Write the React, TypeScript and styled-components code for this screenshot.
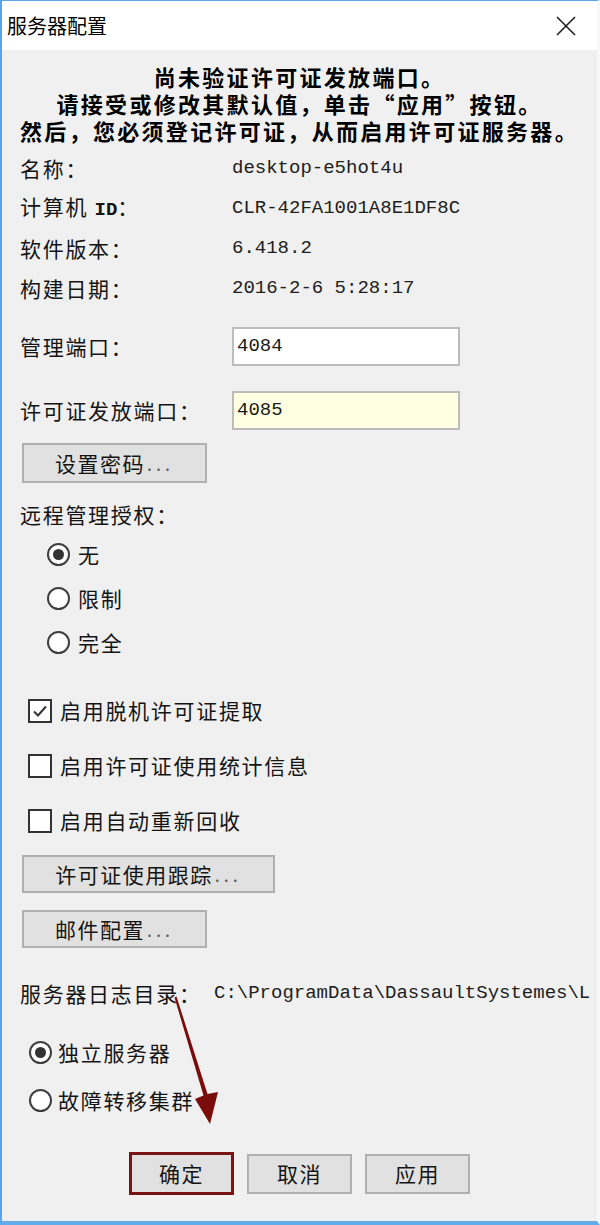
import React from "react";
import styled, { createGlobalStyle } from "styled-components";

const Global = createGlobalStyle`
  html, body { margin: 0; padding: 0; background: #ffffff; }
  * { box-sizing: border-box; }
`;

const CJK = `"Noto Sans CJK SC", "Noto Sans", sans-serif`;
const MONO = `"Liberation Mono", "DejaVu Sans Mono", monospace`;

const Window = styled.div`
  width: 600px;
  height: 1225px;
  border-top: 1px solid #5aa5e6;
  border-left: 2px solid #5aa5e6;
  border-right: 3px solid #f6f8fa;
  border-bottom: 4px solid #64abe9;
  display: flex;
  flex-direction: column;
  font-family: ${CJK};
  color: #141414;
  overflow: hidden;
`;

const TitleBar = styled.div`
  height: 49px;
  flex: none;
  background: #ffffff;
  display: flex;
  align-items: center;
  justify-content: space-between;
  padding: 0 21px 0 5px;
`;

const Title = styled.div`
  font-size: 20px;
  line-height: 1;
  color: #000;
`;

const Body = styled.div`
  flex: 1;
  background: #f0f0f0;
  position: relative;
  display: flex;
  flex-direction: column;
`;

const Header = styled.div`
  padding-top: 13px;
  text-align: center;
  font-size: 22px;
  font-weight: 700;
  letter-spacing: 2.3px;
  line-height: 27px;
  color: #000;
`;

const HeaderLine = styled.div`
  height: 27px;
  overflow: visible;
`;

const Content = styled.div`
  padding-left: 18px;
  display: flex;
  flex-direction: column;
`;

const InfoGrid = styled.div`
  margin-top: 4px;
  display: grid;
  grid-template-columns: 212px 1fr;
  grid-auto-rows: 40px;
  align-items: center;
`;

const Label = styled.div`
  font-size: 21px;
  letter-spacing: 1.7px;
  line-height: 1;
  white-space: nowrap;
`;

const MonoInline = styled.span`
  font-family: ${MONO};
  font-weight: 700;
  font-size: 19px;
  letter-spacing: 0;
`;

const Value = styled.div`
  font-family: ${MONO};
  font-size: 19px;
  color: #202020;
  white-space: nowrap;
  overflow: hidden;
`;

const FieldRow = styled.div<{ $mt: number; $h?: number; $col?: number }>`
  margin-top: ${(p) => p.$mt}px;
  height: ${(p) => p.$h ?? 40}px;
  display: grid;
  grid-template-columns: ${(p) => p.$col ?? 212}px 1fr;
  align-items: center;
`;

const TextBox = styled.input<{ $bg?: string }>`
  width: 228px;
  height: 39px;
  border: 2px solid #bcbcbc;
  background: ${(p) => p.$bg ?? "#ffffff"};
  font-family: ${MONO};
  font-size: 19px;
  color: #1a1a1a;
  padding: 0 0 0 3px;
  outline: none;
`;

const PushButton = styled.button<{ $w: number; $h?: number; $mt?: number; $ml?: number; $primary?: boolean }>`
  width: ${(p) => p.$w}px;
  height: ${(p) => p.$h ?? 40}px;
  margin-top: ${(p) => p.$mt ?? 0}px;
  margin-left: ${(p) => p.$ml ?? 0}px;
  background: #e1e1e1;
  border: ${(p) => (p.$primary ? "3px solid #7a1414" : "2px solid #b0b0b0")};
  font-family: ${CJK};
  font-size: 21px;
  letter-spacing: 1.5px;
  color: #141414;
  padding: 0;
  display: flex;
  align-items: center;
  justify-content: center;
  line-height: 1;
  flex: none;
`;

const Dots = styled.span`
  color: #5a5a5a;
  letter-spacing: 4px;
  font-size: 18px;
  margin-left: 2px;
`;

const GroupLabel = styled.div`
  margin-top: 14px;
  height: 35px;
  display: flex;
  align-items: center;
`;

const OptionList = styled.div<{ $mt: number; $indent: number }>`
  margin-top: ${(p) => p.$mt}px;
  padding-left: ${(p) => p.$indent}px;
  display: flex;
  flex-direction: column;
`;

const Option = styled.div<{ $h: number; $gap: number }>`
  height: ${(p) => p.$h}px;
  display: flex;
  align-items: center;
  gap: ${(p) => p.$gap}px;
`;

const RadioMark = styled.span<{ $on?: boolean }>`
  width: 23px;
  height: 23px;
  border-radius: 50%;
  border: 2px solid #3f3f3f;
  background: #ffffff;
  flex: none;
  display: flex;
  align-items: center;
  justify-content: center;
  &::after {
    content: "";
    width: 11px;
    height: 11px;
    border-radius: 50%;
    background: ${(p) => (p.$on ? "#333333" : "transparent")};
  }
`;

const CheckMark = styled.span`
  width: 24px;
  height: 24px;
  border: 2px solid #333333;
  background: #ffffff;
  flex: none;
  display: flex;
  align-items: center;
  justify-content: center;
`;

const ButtonBar = styled.div`
  margin-top: 28px;
  padding-left: 109px;
  height: 43px;
  display: flex;
  align-items: center;
  gap: 13px;
`;

const Overlay = styled.svg`
  position: absolute;
  left: 0;
  top: 0;
  width: 595px;
  height: 1171px;
  pointer-events: none;
`;

const Radio = ({ on, label, h, gap }: { on?: boolean; label: string; h: number; gap: number }) => (
  <Option $h={h} $gap={gap}>
    <RadioMark $on={on} />
    <Label>{label}</Label>
  </Option>
);

const Check = ({ on, label }: { on?: boolean; label: string }) => (
  <Option $h={55} $gap={8}>
    <CheckMark>
      {on && (
        <svg width="18" height="18" viewBox="0 0 18 18">
          <path d="M3 9.5 L7 13.5 L15 4.5" fill="none" stroke="#333" strokeWidth="2" />
        </svg>
      )}
    </CheckMark>
    <Label>{label}</Label>
  </Option>
);

export default function App() {
  return (
    <>
      <Global />
      <Window>
        <TitleBar>
          <Title>服务器配置</Title>
          <svg width="20" height="20" viewBox="0 0 20 20">
            <path d="M1 1 L19 19 M19 1 L1 19" stroke="#1e1e1e" strokeWidth="1.6" />
          </svg>
        </TitleBar>
        <Body>
          <Header>
            <HeaderLine>尚未验证许可证发放端口。</HeaderLine>
            <HeaderLine>请接受或修改其默认值，单击“应用”按钮。</HeaderLine>
            <HeaderLine>然后，您必须登记许可证，从而启用许可证服务器。</HeaderLine>
          </Header>
          <Content>
            <InfoGrid>
              <Label>名称：</Label>
              <Value>desktop-e5hot4u</Value>
              <Label>
                计算机 <MonoInline>ID</MonoInline>：
              </Label>
              <Value>CLR-42FA1001A8E1DF8C</Value>
              <Label>软件版本：</Label>
              <Value>6.418.2</Value>
              <Label>构建日期：</Label>
              <Value>2016-2-6 5:28:17</Value>
            </InfoGrid>

            <FieldRow $mt={18}>
              <Label>管理端口：</Label>
              <TextBox readOnly defaultValue="4084" />
            </FieldRow>
            <FieldRow $mt={24}>
              <Label>许可证发放端口：</Label>
              <TextBox readOnly defaultValue="4085" $bg="#ffffe1" />
            </FieldRow>

            <PushButton $w={185} $mt={13} $ml={2}>
              设置密码<Dots>...</Dots>
            </PushButton>

            <GroupLabel>
              <Label>远程管理授权：</Label>
            </GroupLabel>
            <OptionList $mt={0} $indent={27}>
              <Radio on label="无" h={44} gap={8} />
              <Radio label="限制" h={44} gap={8} />
              <Radio label="完全" h={44} gap={8} />
            </OptionList>

            <OptionList $mt={19} $indent={8}>
              <Check on label="启用脱机许可证提取" />
              <Check label="启用许可证使用统计信息" />
              <Check label="启用自动重新回收" />
            </OptionList>

            <PushButton $w={253} $h={38} $mt={7} $ml={2}>
              许可证使用跟踪<Dots>...</Dots>
            </PushButton>
            <PushButton $w={185} $h={38} $mt={17} $ml={2}>
              邮件配置<Dots>...</Dots>
            </PushButton>

            <FieldRow $mt={25} $col={194}>
              <Label>服务器日志目录：</Label>
              <Value>C:\ProgramData\DassaultSystemes\L</Value>
            </FieldRow>

            <OptionList $mt={15} $indent={9}>
              <Radio on label="独立服务器" h={48} gap={6} />
              <Radio label="故障转移集群" h={48} gap={6} />
            </OptionList>

            <ButtonBar>
              <PushButton $w={105} $h={43} $primary>
                确定
              </PushButton>
              <PushButton $w={105}>取消</PushButton>
              <PushButton $w={105}>应用</PushButton>
            </ButtonBar>
          </Content>

          <Overlay viewBox="2 50 595 1171">
            <polygon
              points="176.5,996.5 207.5,1094 218,1092 210,1124 195,1099 203.5,1095.5 174.5,997.5"
              fill="#7a0c0c"
            />
          </Overlay>
        </Body>
      </Window>
    </>
  );
}
